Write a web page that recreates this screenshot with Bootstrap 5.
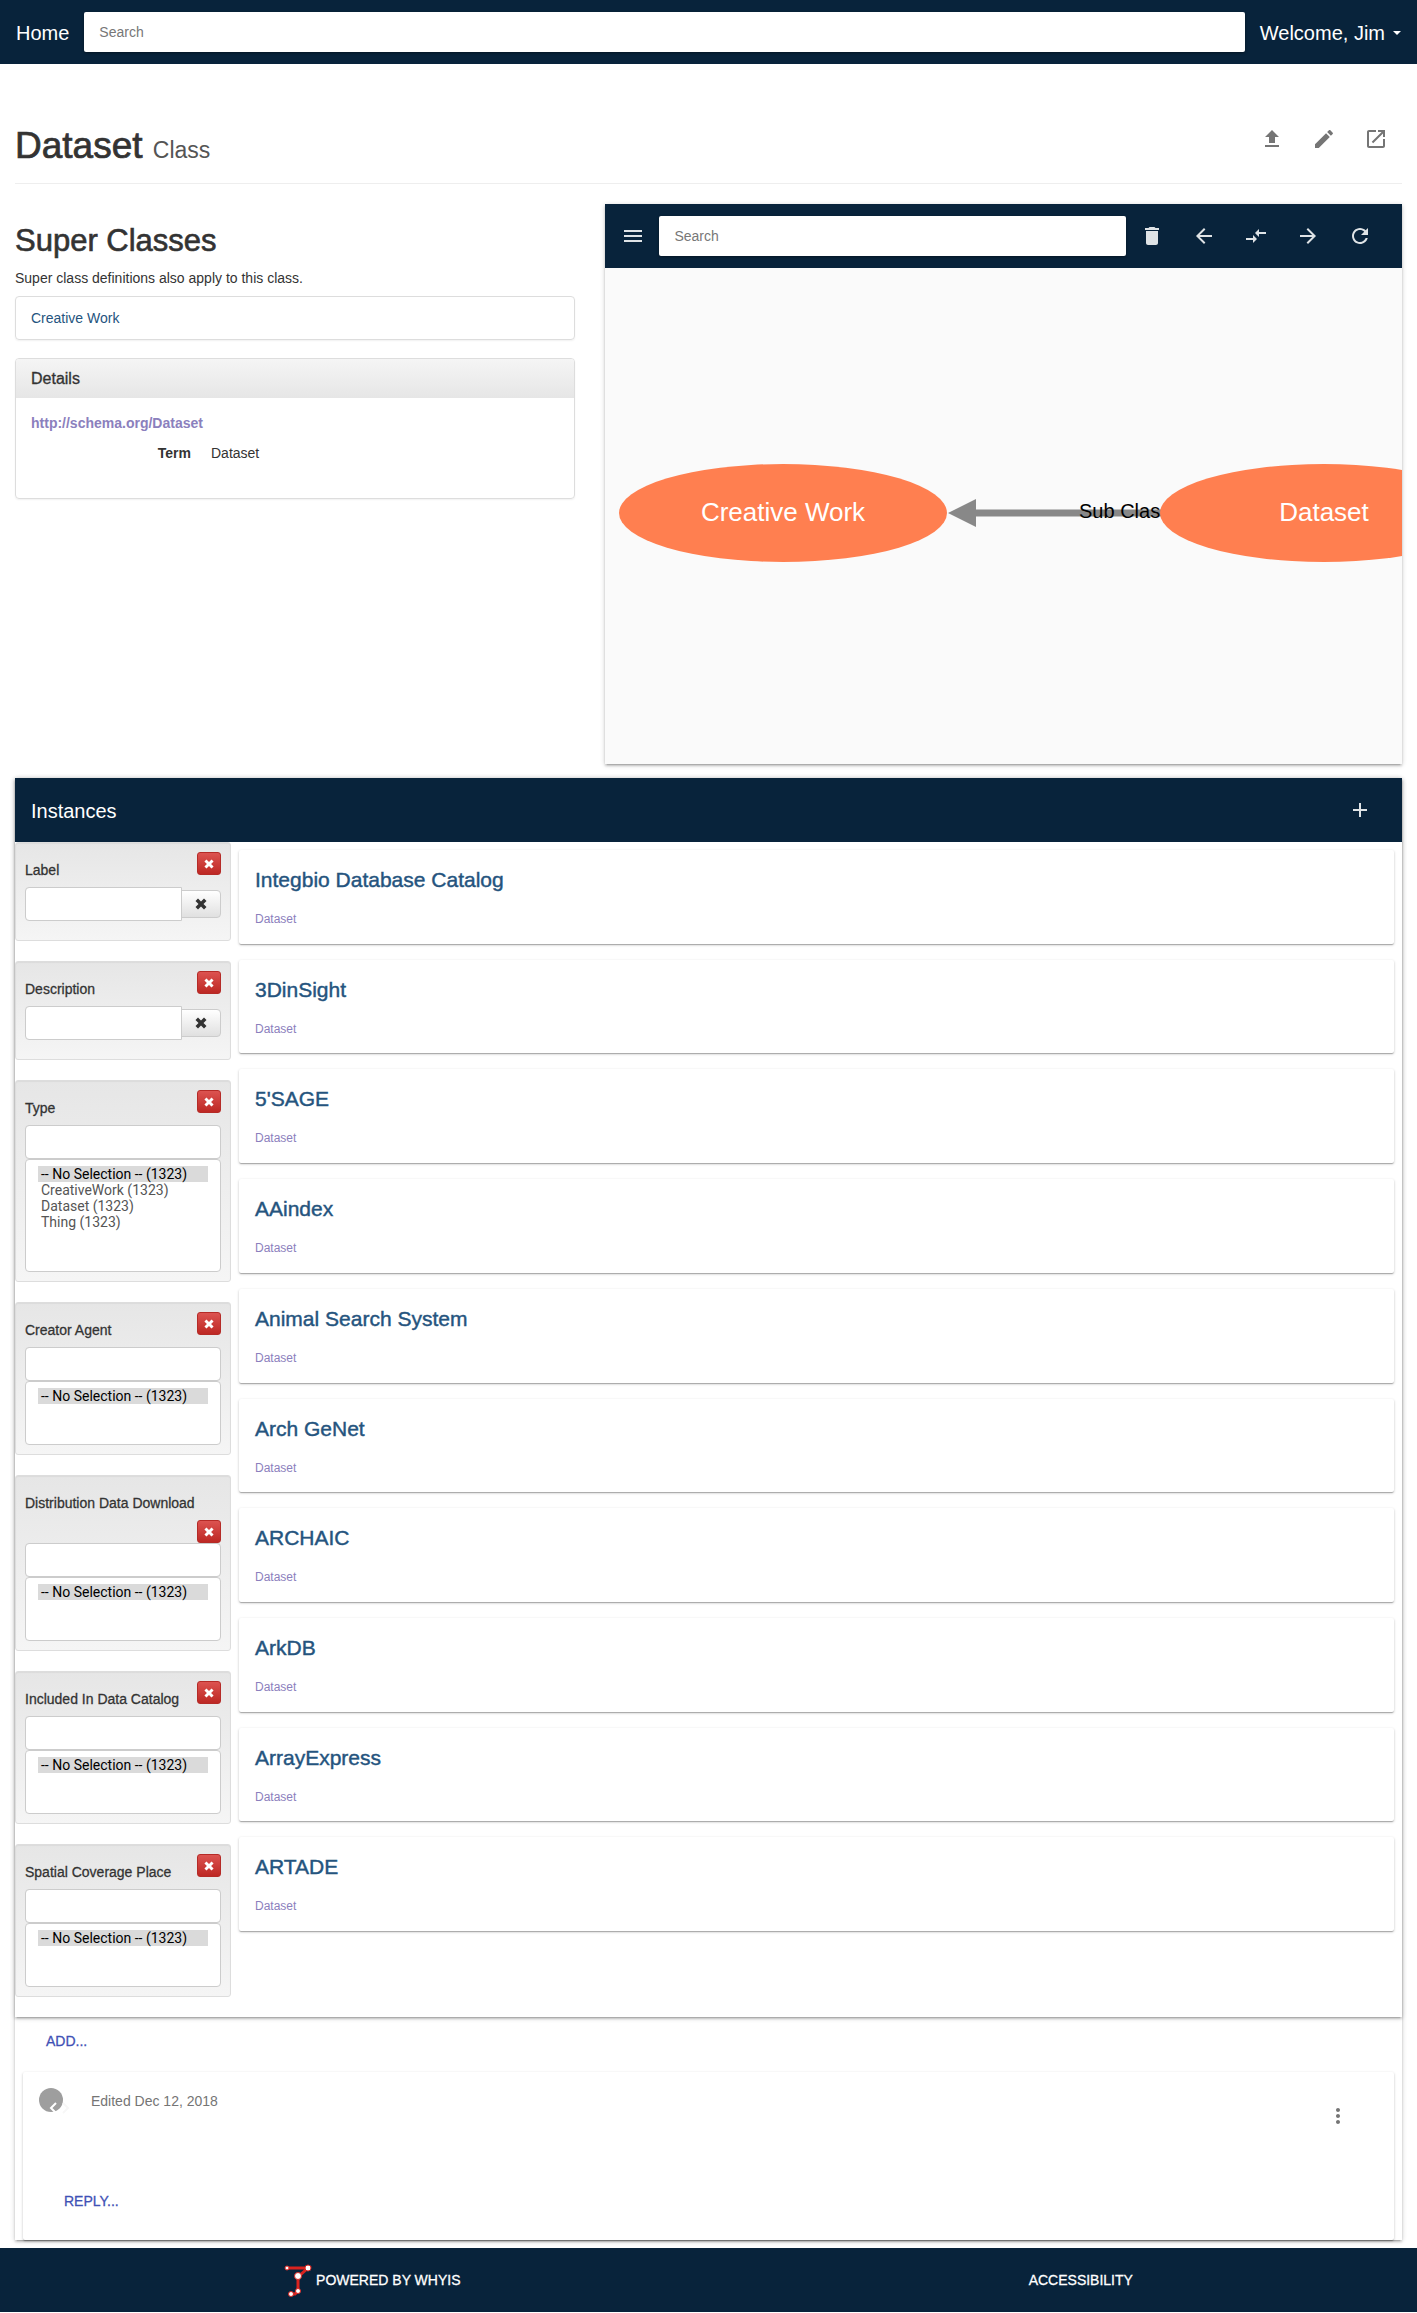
<!DOCTYPE html>
<html lang="en">
<head>
<meta charset="utf-8">
<meta name="viewport" content="width=device-width, initial-scale=1">
<title>Dataset</title>
<link href="https://cdn.jsdelivr.net/npm/bootstrap@5.3.0/dist/css/bootstrap.min.css" rel="stylesheet">
<style>
:root{--navy:#08233b;--link:#25547e;--visited:#8b80bd;--indigo:#3f51b5}
body{font-family:"Liberation Sans",Arial,sans-serif;font-size:14px;line-height:20px;color:#333;background:#fff}
a{text-decoration:none}
.medium{font-weight:400;-webkit-text-stroke:.02em currentColor}
.bar{background:var(--navy);color:#fff;min-height:64px}
.bar-text{font-size:20px;line-height:28px;padding-top:2px;color:#fff}
.bar .form-control{height:40px;border:0;border-radius:2px;padding:0 15px;font-size:14px;box-shadow:0 1px 3px rgba(0,0,0,.4)}
.form-control::placeholder{color:#777;opacity:1}
.site-search{margin:0 15px}
.caret-down{width:8px;height:4px;fill:#fff}
.icon-btn{width:40px;height:40px;margin:0 6px;padding:8px;border:0;line-height:1;color:#757575;flex:none}
.bar .icon-btn{color:#dfe3e6}
.icon-btn svg{width:24px;height:24px;fill:currentColor;display:block}
.page-body{padding:0 15px}
.page-head{padding:55px 0 17px;border-bottom:1px solid #eee;margin-bottom:20px}
.page-head h1{font-size:37px;line-height:40px;margin:7px 0 0}
.page-head .kind{font-size:23px;line-height:1;color:#555;-webkit-text-stroke:0}
.split{--bs-gutter-x:30px}
.super-title{font-size:31px;line-height:40px;margin:17px 0 7px}
.panel{border:1px solid #ddd;border-radius:4px;box-shadow:0 1px 2px rgba(0,0,0,.06)}
.panel-item{padding:11px 15px;margin-bottom:18px}
.panel-item a{color:var(--link)}
.panel-head{padding:10px 15px 9px;font-size:16px;line-height:20px;background:linear-gradient(#f5f5f5,#e6e6e6);margin:0;border-radius:3px 3px 0 0}
.panel-text{padding:15px 15px 35px}
.uri{color:var(--visited);font-weight:700}
.terms{margin:10px 0 0;gap:20px}
.terms dt{width:160px;text-align:right}
.z2{background:#fff;box-shadow:0 1px 5px rgba(0,0,0,.2),0 2px 2px rgba(0,0,0,.14),0 3px 1px -2px rgba(0,0,0,.12)}
.z1{background:#fff;border-radius:2px;box-shadow:0 1px 3px rgba(0,0,0,.2),0 1px 1px rgba(0,0,0,.14),0 2px 1px -1px rgba(0,0,0,.12)}
.graph-bar{padding:0 16px 0 2px}
.graph{display:block;width:100%;height:496px;background:#fafafa}
.instances{margin-top:14px}
.facets{width:216px;flex:none}
.facet{border:1px solid #ddd;border-radius:3px;background:linear-gradient(#e6e6e6,#f5f5f5);padding:9px;margin-bottom:20px;box-shadow:inset 0 1px 1px rgba(0,0,0,.05)}
.facet-head{column-gap:4px}
.facet-head label{margin:8px 0 7px}
.remove{width:24px;height:23px;padding:0;border:1px solid #b52b27;border-radius:3px;background:linear-gradient(#dc5350,#bd2824);display:flex;align-items:center;justify-content:center}
.remove svg{width:10px;height:10px;fill:#fff}
.facet .form-control,.facet .form-select{border:1px solid #ccc;border-radius:4px;background-color:#fff;background-image:none}
.facet .form-control{height:34px;padding:4px 12px}
.facet .input-group{margin-bottom:10px}
.facet .input-group .form-control{border-radius:4px 0 0 4px}
.clear-btn{width:40px;height:28px;padding:0;border:1px solid #ccc;background:linear-gradient(#fff,#e0e0e0);border-radius:0 4px 4px 0!important;display:flex;align-items:center;justify-content:center}
.clear-btn svg{width:12px;height:12px;fill:#333}
.facet select.form-select{height:64px;padding:6px 12px;font:14px/16px Roboto,sans-serif;color:#555;overflow:hidden}
.facet select.tall{height:113px}
.facet option{padding:0 3px;min-height:16px;line-height:16px}
.facet option:checked{background:#dadada linear-gradient(#dadada,#dadada);color:#000}
.results{padding:8px 8px 86px}
.result{padding:17px 16px 12px}
.result h3{font-size:21px;line-height:26px;margin:0 0 16px}
.result h3 a{color:var(--link)}
.result .tag{display:block;font-size:12px;line-height:20px;color:var(--visited)}
.text-btn{color:var(--indigo);padding:8px;border:0;font-size:14px;line-height:20px;display:block}
.add-row{padding:6px 23px 13px}
.reply-row{padding:47px 17px 13px}
.comment{margin:0 8px;padding:12px 16px 8px}
.comment .edited{color:#757575;margin-top:7px}
.comment .icon-btn{margin:12px 20px 0 0}
.avatar-icon{width:30px;height:28px;margin:4px 22px 0 0}
footer{margin-top:8px}
footer a{color:#fff}
.brand-logo{width:28px;height:34px}
</style>
</head>
<body>
<svg class="d-none"><symbol id="x" viewBox="0 0 12 12"><path d="M3 .5 6 3.500 9 .5 11.500 3 8.500 6 11.500 9 9 11.500 6 8.500 3 11.500.5 9 3.500 6 .5 3Z"/></symbol></svg>
<nav class="bar d-flex align-items-center px-3">
  <a class="bar-text" href="#">Home</a>
  <input class="form-control flex-fill site-search" type="search" placeholder="Search" aria-label="Search">
  <a class="bar-text d-flex align-items-center gap-2 text-nowrap" href="#">Welcome, Jim <svg class="caret-down" viewBox="0 0 8 4"><path d="M0 0h8L4 4z"/></svg></a>
</nav>
<main class="page-body">
  <header class="page-head d-flex justify-content-between align-items-start">
    <h1 class="medium">Dataset <span class="kind">Class</span></h1>
    <div class="d-flex">
      <button class="btn icon-btn" aria-label="Upload"><svg viewBox="0 0 24 24"><path d="M9 16h6v-6h4l-7-7-7 7h4zm-4 2h14v2H5z"/></svg></button>
      <button class="btn icon-btn" aria-label="Edit"><svg viewBox="0 0 24 24"><path d="M3 17.250V21h3.750L17.810 9.940l-3.750-3.750L3 17.250zM20.710 7.040c.39-.39.39-1.020 0-1.410l-2.340-2.340c-.39-.39-1.020-.39-1.410 0l-1.830 1.830 3.750 3.750 1.830-1.830z"/></svg></button>
      <button class="btn icon-btn" aria-label="Open"><svg viewBox="0 0 24 24"><path d="M19 19H5V5h7V3H5c-1.110 0-2 .9-2 2v14c0 1.100.89 2 2 2h14c1.100 0 2-.9 2-2v-7h-2v7zM14 3v2h3.590l-9.830 9.830 1.410 1.410L19 6.410V10h2V3h-7z"/></svg></button>
    </div>
  </header>
  <div class="row split">
    <section class="col-5">
      <h2 class="medium super-title">Super Classes</h2>
      <p class="mb-2">Super class definitions also apply to this class.</p>
      <div class="panel panel-item"><a href="#">Creative Work</a></div>
      <div class="panel">
        <h4 class="panel-head medium">Details</h4>
        <div class="panel-text">
          <a class="uri" href="#">http://schema.org/Dataset</a>
          <dl class="terms d-flex"><dt>Term</dt><dd class="mb-0">Dataset</dd></dl>
        </div>
      </div>
    </section>
    <section class="col-7">
      <div class="z2">
        <div class="bar graph-bar d-flex align-items-center">
          <button class="btn icon-btn" aria-label="Menu"><svg viewBox="0 0 24 24"><path d="M3 18h18v-2H3v2zm0-5h18v-2H3v2zm0-7v2h18V6H3z"/></svg></button>
          <input class="form-control flex-fill" type="search" placeholder="Search" aria-label="Search graph">
          <button class="btn icon-btn" aria-label="Delete"><svg viewBox="0 0 24 24"><path d="M6 19c0 1.100.9 2 2 2h8c1.100 0 2-.9 2-2V7H6v12zM19 4h-3.500l-1-1h-5l-1 1H5v2h14V4z"/></svg></button>
          <button class="btn icon-btn" aria-label="Incoming"><svg viewBox="0 0 24 24"><path d="M20 11H7.830l5.590-5.590L12 4l-8 8 8 8 1.410-1.410L7.830 13H20v-2z"/></svg></button>
          <button class="btn icon-btn" aria-label="Both"><svg viewBox="0 0 24 24"><path d="M9.010 14H2v2h7.010v3L13 15l-3.990-4v3zm5.980-1v-3H22V8h-7.010V5L11 9l3.990 4z"/></svg></button>
          <button class="btn icon-btn" aria-label="Outgoing"><svg viewBox="0 0 24 24"><path d="M12 4l-1.410 1.410L16.170 11H4v2h12.170l-5.580 5.590L12 20l8-8z"/></svg></button>
          <button class="btn icon-btn" aria-label="Refresh"><svg viewBox="0 0 24 24"><path d="M17.650 6.350C16.200 4.900 14.210 4 12 4c-4.420 0-7.990 3.580-7.990 8s3.570 8 7.990 8c3.730 0 6.840-2.550 7.730-6h-2.080c-.82 2.330-3.040 4-5.650 4-3.310 0-6-2.690-6-6s2.690-6 6-6c1.660 0 3.140.69 4.220 1.780L13 11h7V4l-2.350 2.350z"/></svg></button>
        </div>
        <svg class="graph" font-family="Liberation Sans, sans-serif">
          <path d="M368 245H600" stroke="#888" stroke-width="7"/>
          <path d="M343 245l28-14v28z" fill="#888"/>
          <text x="474" y="250" font-size="20" fill="#000">Sub Class Of</text>
          <g fill="#ff7f50"><ellipse cx="178" cy="245" rx="164" ry="49"/><ellipse cx="719" cy="245" rx="164" ry="49"/></g>
          <g fill="#fff" font-size="26" text-anchor="middle"><text x="178" y="253">Creative Work</text><text x="719" y="253">Dataset</text></g>
        </svg>
      </div>
    </section>
  </div>
  <div class="z2 instances">
    <section class="z2">
      <div class="bar d-flex align-items-center justify-content-between px-3">
        <span class="bar-text">Instances</span>
        <button class="btn icon-btn" aria-label="Add instance"><svg viewBox="0 0 24 24"><path d="M19 13h-6v6h-2v-6H5v-2h6V5h2v6h6v2z"/></svg></button>
      </div>
      <div class="d-flex">
        <aside class="facets" id="facets"></aside>
        <div class="results d-flex flex-column flex-fill gap-3" id="results"></div>
      </div>
    </section>
    <div class="add-row"><button class="btn text-btn medium">ADD...</button></div>
    <article class="comment z1">
      <div class="d-flex align-items-start">
        <svg class="avatar-icon" viewBox="0 0 30 28"><circle cx="12" cy="12" r="12" fill="#9e9e9e"/><path d="M17 15l-5 5 5 5" fill="none" stroke="#fff" stroke-width="2"/><path d="M24 15l5 5-5 5" fill="none" stroke="#f7f7f7" stroke-width="2"/></svg>
        <span class="flex-fill edited">Edited Dec 12, 2018</span>
        <button class="btn icon-btn" aria-label="More"><svg viewBox="0 0 24 24"><path d="M12 8c1.100 0 2-.9 2-2s-.9-2-2-2-2 .9-2 2 .9 2 2 2zm0 2c-1.100 0-2 .9-2 2s.9 2 2 2 2-.9 2-2-.9-2-2-2zm0 6c-1.100 0-2 .9-2 2s.9 2 2 2 2-.9 2-2-.9-2-2-2z"/></svg></button>
      </div>
      <div class="reply-row"><button class="btn text-btn medium">REPLY...</button></div>
    </article>
  </div>
</main>
<footer class="bar d-flex align-items-center justify-content-around">
  <a class="medium d-flex align-items-center" href="#"><svg class="brand-logo me-1" viewBox="0 0 28 34"><path d="M3 5h21L14 14v14l-3 3H7" fill="none" stroke="#d9231f" stroke-width="3"/><g fill="#fff" stroke="#d9231f"><circle cx="3" cy="5" r="2"/><circle cx="24" cy="5" r="3"/><circle cx="14" cy="13" r="3.500"/><circle cx="14" cy="28" r="2.500"/><circle cx="7" cy="31" r="2.500"/></g></svg>POWERED BY WHYIS</a>
  <a class="medium" href="#">ACCESSIBILITY</a>
</footer>
<script src="https://cdn.jsdelivr.net/npm/bootstrap@5.3.0/dist/js/bootstrap.bundle.min.js"></script>
<script>
const cross='<svg aria-hidden="true"><use href="#x"/></svg>';
const none='-- No Selection -- (1323)';
const facets=[['Label'],['Description'],['Type',[none,'CreativeWork (1323)','Dataset (1323)','Thing (1323)']],['Creator Agent',[none]],['Distribution Data Download',[none]],['Included In Data Catalog',[none]],['Spatial Coverage Place',[none]]];
document.getElementById('facets').innerHTML=facets.map(([name,opts],i)=>`
<div class="facet"><div class="facet-head d-flex flex-wrap align-items-start">
<label class="medium" for="f${i}">${name}</label><button class="btn remove ms-auto" aria-label="Remove ${name}">${cross}</button></div>
${opts?`<input class="form-control" id="f${i}" type="text"><select class="form-select ${opts.length>1?'tall':''}" size="4" aria-label="${name} values">${opts.map((o,k)=>`<option${k?'':' selected'}>${o}</option>`).join('')}</select>`
:`<div class="input-group align-items-center"><input class="form-control" id="f${i}" type="text"><button class="btn clear-btn" aria-label="Clear ${name}">${cross}</button></div>`}</div>`).join('');
document.getElementById('results').innerHTML=['Integbio Database Catalog','3DinSight',"5'SAGE",'AAindex','Animal Search System','Arch GeNet','ARCHAIC','ArkDB','ArrayExpress','ARTADE'].map(t=>`
<article class="result z1 flex-fill"><h3 class="medium"><a href="#">${t}</a></h3><a class="tag" href="#">Dataset</a></article>`).join('');
</script>
</body>
</html>
